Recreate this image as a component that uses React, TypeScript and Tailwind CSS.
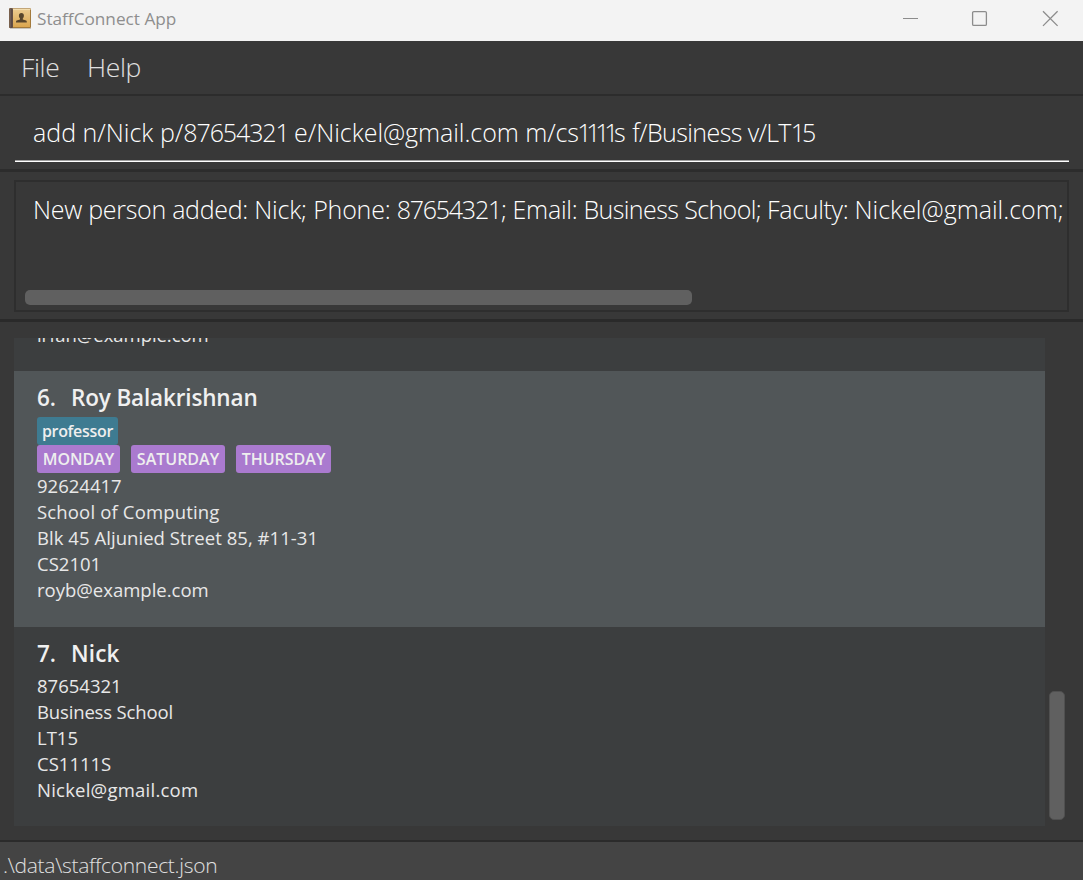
import type { ReactNode } from "react";

const light = "font-['Open_Sans','Noto_Sans',sans-serif] font-light whitespace-pre";

function Tag({ className, children }: { className: string; children: ReactNode }) {
  return (
    <span className={`flex h-7 items-center justify-center rounded-[3px] text-[16px] font-semibold whitespace-pre text-[#eeeeee] ${className}`}>
      {children}
    </span>
  );
}

function Line({ className = "", children }: { className?: string; children: ReactNode }) {
  return <div className={`h-[26px] text-[18.5px] leading-[26px] whitespace-pre text-[#e8e8e8] ${className}`}>{children}</div>;
}

function BookIcon() {
  return (
    <svg width="23" height="22" viewBox="0 0 23 22">
      <defs>
        <linearGradient id="cover" x1="0" y1="0" x2="0" y2="1">
          <stop offset="0" stopColor="#eccb8f" />
          <stop offset="1" stopColor="#dba64f" />
        </linearGradient>
      </defs>
      <rect x="1" y="19.8" width="21" height="1.2" fill="#c9c5be" />
      <rect x="0" y="0.3" width="22" height="19.7" rx="1" fill="#a37a3c" />
      <rect x="4" y="1.4" width="17" height="17.6" fill="url(#cover)" />
      <rect x="3.5" y="0.8" width="18" height="1.1" fill="#f7e3b4" />
      <rect x="0.3" y="0.3" width="3.6" height="19.7" rx="0.8" fill="#5c4a44" />
      <path d="M1.1 1v18.5" stroke="#8b7770" strokeWidth="0.7" />
      <path d="M12.400 5.100c1.7 0 2.5 1.100 2.500 2.700 0 1.200-.5 2.100-1.100 2.700v1.100l3.300 1c.5.2.7.5.7 1.100v.9H7v-.9c0-.6.2-.9.7-1.100l3.300-1v-1.100c-.6-.6-1.100-1.500-1.100-2.700 0-1.600.8-2.700 2.500-2.700Z" fill="#58452c" />
    </svg>
  );
}

function TitleBar() {
  return (
    <header className="flex h-[41px] shrink-0 items-start bg-[#f3f3f3] pl-[9px] pr-[24px]">
      <div className="pt-[8px]"><BookIcon /></div>
      <div className="ml-[5px] h-[37px] text-[17.2px] leading-[37px] whitespace-pre text-[#8e8e8e]">StaffConnect App</div>
      <svg className="mt-[10px] ml-auto" width="157" height="18" viewBox="0 0 157 18" fill="none" stroke="#8c8c8c">
        <path d="M1 8.5h15" />
        <rect x="70.6" y="1.6" width="13.8" height="13.8" rx="1.2" strokeWidth="1.3" />
        <path d="m141 1.300 14.600 14.600M155.600 1.300 141 15.900" strokeWidth="1.3" />
      </svg>
    </header>
  );
}

export default function App() {
  return (
    <div className="flex h-[880px] w-[1083px] flex-col overflow-hidden bg-[#383838] font-['Open_Sans','Noto_Sans',sans-serif]">
      <TitleBar />
      <nav className={`flex h-[55px] shrink-0 border-b-2 border-[#2c2c2c] pl-[21px] text-[26.5px] leading-[52px] tracking-[-0.35px] text-[#e0e0e0] ${light}`}>
        <span className="w-[66px]">File</span>
        <span>Help</span>
      </nav>
      <section className="h-[76px] shrink-0 border-b-[3px] border-[#2c2c2c] pl-[15px] pr-[14px]">
        <div className={`h-[66px] border-b border-white pl-[18px] text-[25px] leading-[73px] text-white shadow-[inset_0_-1px_0_#a0a0a0] ${light}`}>
          <span>add n/Nick p/</span>
          <span className="tracking-[-1.1px]">87654321 </span>
          <span className="tracking-[-0.05px]">e/Nickel@gmail.com </span>
          <span className="tracking-[-0.2px]">m/c</span>
          <span className="tracking-[-1.5px]">s</span>
          <span className="tracking-[-5.3px]">111</span>
          <span className="tracking-[-4.5px]">1</span>
          <span>s </span>
          <span className="tracking-[-0.6px]">f/Business </span>
          <span className="tracking-[-0.7px]">v/LT</span>
          <span className="tracking-[-3px]">1</span>
          <span>5</span>
        </div>
      </section>
      <section className="h-[150px] shrink-0 border-b-[3px] border-[#2a2a2a] px-[14px] pt-[8px]">
        <div className="flex h-[132px] flex-col justify-between overflow-hidden border-2 border-[#2e2e2e] pl-[9px] pb-[5px]">
          <div className={`pl-[8px] text-[25px] leading-[55px] text-white ${light}`}>
            <span className="tracking-[-0.28px]">New person added: </span>
            <span className="tracking-[-0.2px]">Nick; Phone: </span>
            <span className="tracking-[-1.25px]">87654321</span>
            <span className="tracking-[-0.4px]">; </span>
            <span className="tracking-[-0.28px]">Email: </span>
            <span className="tracking-[-0.6px]">Business School; </span>
            <span className="tracking-[-0.33px]">Faculty: </span>
            <span>Nickel@gmail.com;</span>
          </div>
          <div className="h-[15px] w-[667px] rounded-[5px] bg-[#606060]" />
        </div>
      </section>
      <main className="flex h-[518px] shrink-0 pt-[16px] pl-[14px]">
        <div className="flex h-[488px] w-[1031px] flex-col overflow-hidden">
          <div className="flex h-[33px] shrink-0 flex-col justify-end overflow-hidden bg-[#3c3e3f] pb-[23px] pl-[23px]">
            <Line className="shrink-0 tracking-[-0.05px]">irfan@example.com</Line>
          </div>
          <div className="h-[256px] shrink-0 bg-[#515658] pt-[10px] pl-[23px]">
            <h2 className="flex h-[36px] text-[22.500px] leading-[34px] font-semibold text-[#f0f0f0]">
              <span className="w-[34px]">6.</span>
              <span className="tracking-[-0.15px]">Roy Balakrishnan</span>
            </h2>
            <div className="flex"><Tag className="w-[81px] bg-[#3e7b91] tracking-[-0.3px]">professor</Tag></div>
            <div className="flex">
              <Tag className="w-[83px] bg-[#aa7acf]">MONDAY</Tag>
              <Tag className="ml-[11px] w-[94px] bg-[#aa7acf]">SATURDAY</Tag>
              <Tag className="ml-[11px] w-[95px] bg-[#aa7acf]">THURSDAY</Tag>
            </div>
            <Line>92624417</Line>
            <Line className="tracking-[0.16px]">School of Computing</Line>
            <Line className="tracking-[0.05px]">Blk 45 Aljunied Street 85, #11-31</Line>
            <Line>CS2101</Line>
            <Line>royb@example.com</Line>
          </div>
          <div className="h-[199px] shrink-0 bg-[#3c3e3f] pt-[10px] pl-[23px]">
            <h2 className="flex h-[36px] text-[22.500px] leading-[34px] font-semibold text-[#f0f0f0]">
              <span className="w-[34px]">7.</span>
              <span className="tracking-[0.15px]">Nick</span>
            </h2>
            <Line>87654321</Line>
            <Line className="tracking-[-0.15px]">Business School</Line>
            <Line>LT15</Line>
            <Line>CS1111S</Line>
            <Line className="tracking-[0.23px]">Nickel@gmail.com</Line>
          </div>
        </div>
        <div className="ml-[4px] flex h-[482px] flex-col justify-end">
          <div className="h-[129px] w-[16px] rounded-[5px] border border-[#505050] bg-[#606060]" />
        </div>
      </main>
      <footer className={`h-[41px] shrink-0 border-t-2 border-[#2b2b2b] bg-[#444444] pl-[3px] text-[21px] leading-[46px] tracking-[-0.3px] text-[#e0e0e0] ${light}`}>
        .\data\staffconnect.json
      </footer>
    </div>
  );
}
